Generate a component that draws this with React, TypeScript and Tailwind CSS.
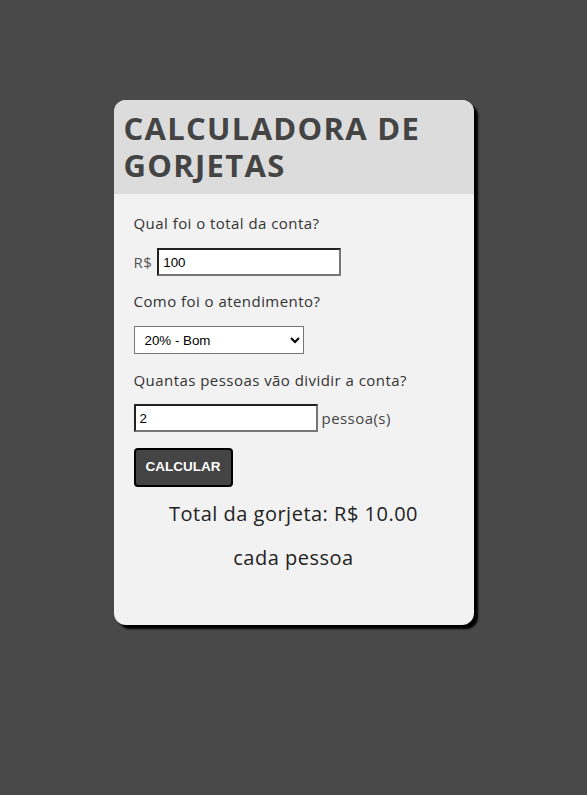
import { useState } from 'react';

export default function App() {
  const [bill, setBill] = useState('100');
  const [tip, setTip] = useState('0.2');
  const [people, setPeople] = useState('2');

  const count = parseInt(people) || 1;
  const perPerson = ((parseFloat(bill) || 0) * parseFloat(tip)) / count;

  return (
    <div className="min-h-[795px] bg-[#494949] pt-[100px] font-['Open_Sans',sans-serif]">
      <div className="mx-auto w-[360px] min-h-[525px] rounded-[12px] bg-[#f2f2f2] overflow-hidden shadow-[4px_4px_2px_#000]">
        {/* Header */}
        <div className="bg-[#dcdcdc] px-[10px] py-[10px]">
          <h1 className="text-[31px] leading-[37px] font-bold text-[#444] tracking-[1.3px]">
            CALCULADORA DE GORJETAS
          </h1>
        </div>

        <div className="px-[20px] pt-[19px] text-[#333] text-[15px] tracking-[0.45px]">
          <p className="leading-[20px]">Qual foi o total da conta?</p>

          <div className="mt-[15px] flex items-center gap-[5px]">
            <span className="text-[#555]">R$</span>
            <input
              type="number"
              value={bill}
              onChange={(e) => setBill(e.target.value)}
              className="w-[184px] h-[28px] bg-white px-[4px] text-[13.33px] tracking-normal text-black font-['Liberation_Sans',Arial,sans-serif] border-2 border-t-[#222] border-l-[#222] border-r-[#767676] border-b-[#767676] outline-none"
            />
          </div>

          <p className="mt-[15px] leading-[20px]">Como foi o atendimento?</p>

          <select
            value={tip}
            onChange={(e) => setTip(e.target.value)}
            className="mt-[15px] block w-[170px] h-[28px] bg-white pl-[6px] text-[13.33px] tracking-normal text-black font-['Liberation_Sans',Arial,sans-serif] border border-[#767676]"
          >
            <option value="0.3">30% - Muito bom</option>
            <option value="0.2">20% - Bom</option>
            <option value="0.15">15% - Bacana</option>
            <option value="0.1">10% - Ruim</option>
            <option value="0.05">5% - Muito ruim</option>
          </select>

          <p className="mt-[16px] leading-[20px]">Quantas pessoas vão dividir a conta?</p>

          <div className="mt-[14px] flex items-center gap-[4px]">
            <input
              type="number"
              value={people}
              onChange={(e) => setPeople(e.target.value)}
              className="w-[184px] h-[28px] bg-white px-[4px] text-[13.33px] tracking-normal text-black font-['Liberation_Sans',Arial,sans-serif] border-2 border-t-[#222] border-l-[#222] border-r-[#767676] border-b-[#767676] outline-none"
            />
            <span className="text-[#444]">pessoa(s)</span>
          </div>

          <button className="mt-[16px] h-[39px] px-[10px] rounded-[4px] border-2 border-black bg-[#444] text-white font-bold text-[13.5px] tracking-normal font-['Liberation_Sans',Arial,sans-serif]">
            CALCULAR
          </button>

          <div className="mt-[13px] text-center text-[20px] text-[#222] leading-[28px] tracking-[0.5px]">
            <p>Total da gorjeta: R$ {perPerson.toFixed(2)}</p>
            <p className="mt-[16px]">cada pessoa</p>
          </div>
        </div>
      </div>
    </div>
  );
}
